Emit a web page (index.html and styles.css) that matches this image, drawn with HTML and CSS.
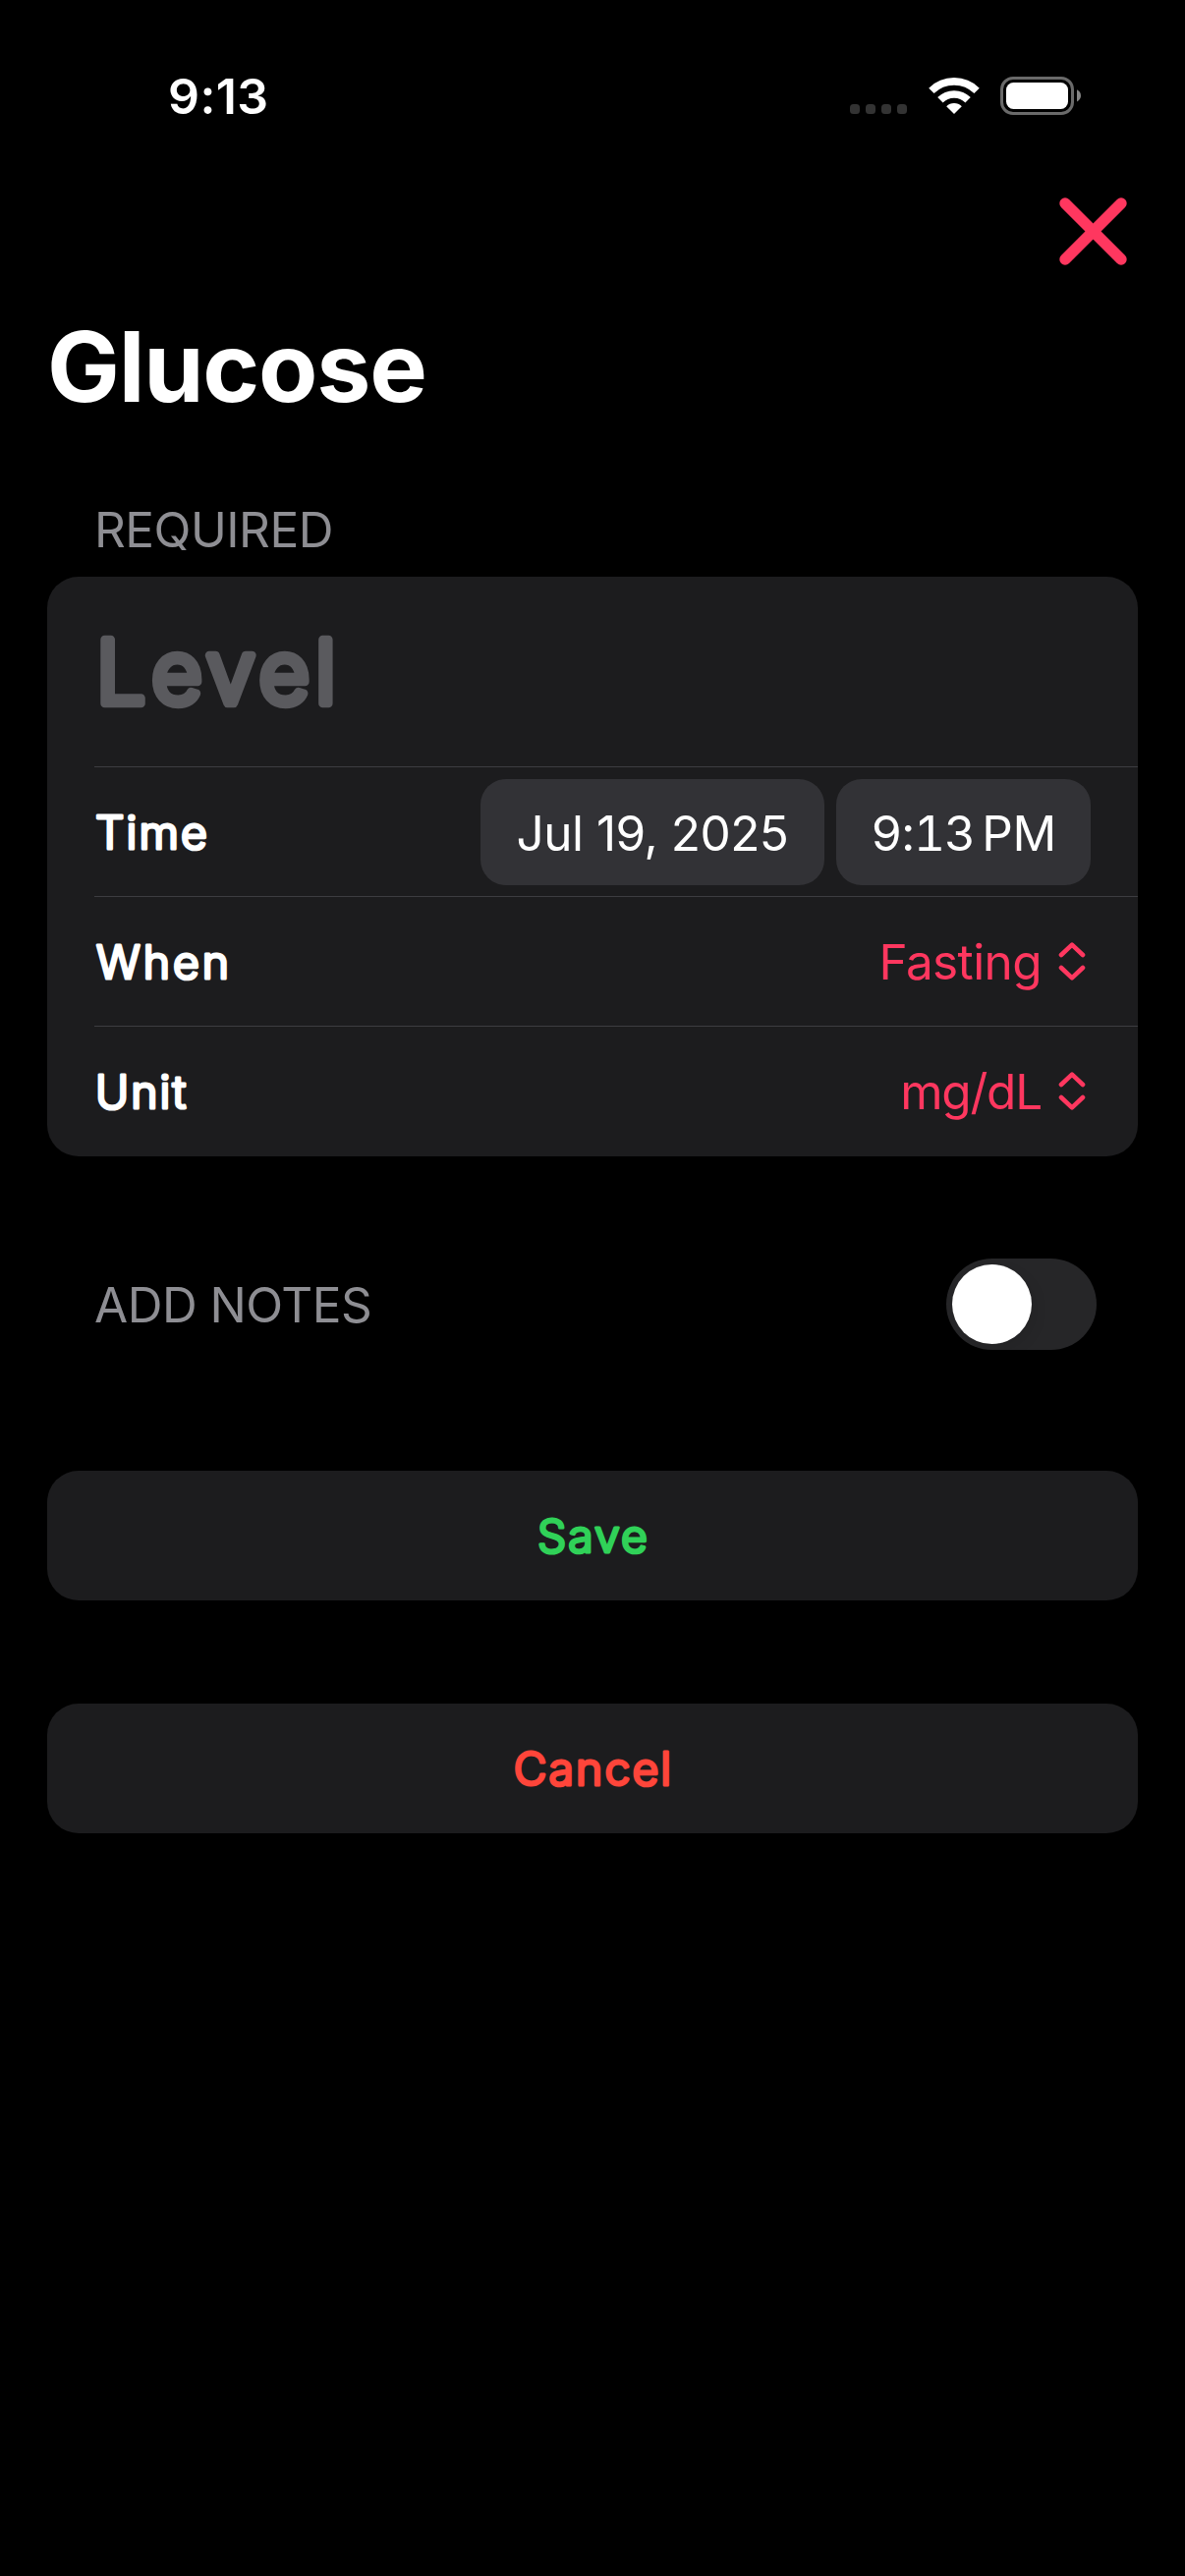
FILE: index.html
```
<!DOCTYPE html>
<html lang="en">
<head>
  <meta charset="UTF-8" />
  <meta name="viewport" content="width=device-width, initial-scale=1.0"/>
  <title>Glucose</title>
  <link rel="stylesheet" href="styles.css">
</head>
<body>
  <div class="status-bar">
    <span class="clock">9:13</span>
    <div class="status-icons">
      <div class="dots"><i></i><i></i><i></i><i></i></div>
      <svg class="wifi" width="52" height="37" viewBox="0 0 52 37">
        <path d="M2.9 13.4A32.8 32.8 0 0 1 49.1 13.4M11.9 22.8A19.9 19.9 0 0 1 40.1 22.8" fill="none" stroke="#fff" stroke-width="7.6"/>
        <path d="M26 37L18.2 29.2A11.2 11.2 0 0 1 33.8 29.2Z" fill="#fff"/>
      </svg>
      <svg class="battery" width="83" height="39" viewBox="0 0 83 39">
        <rect x="1.5" y="1.5" width="72" height="36" rx="11.5" fill="none" stroke="#6a6a6a" stroke-width="3"/>
        <rect x="6" y="6" width="63" height="27" rx="7.5" fill="#fff"/>
        <path d="M78 13.2Q82 15.2 82 19.3T78 25.4Z" fill="#858585"/>
      </svg>
    </div>
  </div>

  <header>
    <button class="close-btn" aria-label="Close">
      <svg width="69" height="69" viewBox="0 0 69 69">
        <path d="M6 6L63 63M63 6L6 63" stroke="#ff375f" stroke-width="11.4" stroke-linecap="round"/>
      </svg>
    </button>
    <h1>Glucose</h1>
  </header>

  <h2 class="section-title">REQUIRED</h2>
  <div class="card">
    <div class="row level-row">
      <svg class="rounded level" width="260" height="100"><text x="2" y="82">Level</text></svg>
    </div>
    <div class="row">
      <svg class="rounded label" width="160" height="60"><text x="1" y="47">Time</text></svg>
      <div class="pickers">
        <span class="picker date">Jul 19, 2025</span>
        <span class="picker time"><span class="digits">9:13</span><span class="ampm">PM</span></span>
      </div>
    </div>
    <div class="row">
      <svg class="rounded label when" width="160" height="60"><text x="2" y="47">When</text></svg>
      <div class="menu">
        <span>Fasting</span>
        <svg class="chevrons" width="28" height="42" viewBox="0 0 28 42"><path d="M3 14L14 3.6L25 14M3 27L14 37.4L25 27"/></svg>
      </div>
    </div>
    <div class="row">
      <svg class="rounded label" width="160" height="60"><text x="1" y="47">Unit</text></svg>
      <div class="menu">
        <span class="unit">mg/dL</span>
        <svg class="chevrons" width="28" height="42" viewBox="0 0 28 42"><path d="M3 14L14 3.6L25 14M3 27L14 37.4L25 27"/></svg>
      </div>
    </div>
  </div>

  <div class="notes">
    <h2 class="section-title">ADD NOTES</h2>
    <div class="toggle"><div class="knob"></div></div>
  </div>

  <button class="card action save">
    <svg class="rounded label" width="200" height="60"><text x="101" y="47">Save</text></svg>
  </button>
  <button class="card action cancel">
    <svg class="rounded label" width="200" height="60"><text x="101" y="47">Cancel</text></svg>
  </button>
</body>
</html>
```
FILE: styles.css
```
* {
  box-sizing: border-box;
}
body {
  margin: 0;
  padding: 0 48px;
  background-color: #000;
  color: #fff;
  font-family: Inter, "Liberation Sans", sans-serif;
  font-size: 49.5px;
}
svg {
  display: block;
}
button {
  border: none;
  background: none;
  padding: 0;
  cursor: pointer;
}
.status-bar {
  height: 195px;
  display: flex;
  align-items: center;
  justify-content: space-between;
  padding: 0 57px 0 123px;
}
.clock {
  font-size: 50px;
  font-weight: 600;
  letter-spacing: 0.4px;
}
.status-icons {
  display: flex;
  align-items: center;
}
.dots {
  display: flex;
  gap: 6px;
  padding-top: 26px;
}
.dots i {
  width: 10px;
  height: 10px;
  border-radius: 3.5px;
  background-color: #333;
}
.wifi {
  margin: 0 21px 0 22px;
}

/* header */
header {
  display: flex;
  flex-direction: column;
  padding-top: 6px;
}
.close-btn {
  align-self: flex-end;
  margin-right: 11px;
}
h1 {
  margin: 44px 0 0;
  font-size: 98.5px;
  line-height: 120px;
  font-weight: 700;
  letter-spacing: -1.2px;
}
.section-title {
  margin: 0;
  padding-left: 48px;
  font-size: 49.5px;
  line-height: 60px;
  font-weight: 400;
  letter-spacing: -0.5px;
  color: #8e8e93;
}
header + .section-title {
  margin: 75px 0 18px;
}

/* form */
.card {
  background-color: #1c1c1e;
  border-radius: 32px;
}
.row {
  height: 132px;
  margin-left: 48px;
  padding-right: 48px;
  display: flex;
  align-items: center;
  justify-content: space-between;
}
.row + .row {
  border-top: 1px solid #3d3d41;
}
.level-row {
  height: 193px;
}
.card .row:last-child {
  height: 133px;
}
/* thin weight plus a round-joined stroke gives the soft corners */
.rounded {
  overflow: visible;
  fill: currentColor;
  stroke: currentColor;
  stroke-linejoin: round;
  font-weight: 300;
}
.label {
  font-size: 46.3px;
  stroke-width: 3.2px;
  letter-spacing: 2.1px;
}
.when {
  letter-spacing: 3px;
}
.level {
  font-size: 89px;
  stroke-width: 8.5px;
  letter-spacing: 5.9px;
  color: #5a5a5e;
}
.pickers {
  display: flex;
  gap: 12px;
}
.picker {
  height: 108px;
  display: flex;
  align-items: center;
  justify-content: center;
  border-radius: 26px;
  background-color: #323236;
  padding-top: 2px;
}
.date {
  width: 350px;
  letter-spacing: -0.5px;
}
.time {
  width: 259px;
}
.digits {
  font-variant-numeric: tabular-nums;
  letter-spacing: -0.9px;
}
.ampm {
  margin-left: 7px;
  letter-spacing: -0.5px;
}
.menu {
  display: flex;
  align-items: center;
  gap: 17px;
  padding-right: 5px;
  color: #ff375f;
  letter-spacing: -0.6px;
}
.unit {
  letter-spacing: -1.2px;
}
.chevrons {
  fill: none;
  stroke: currentColor;
  stroke-width: 4.6px;
  stroke-linecap: round;
  stroke-linejoin: round;
}
.notes {
  display: flex;
  align-items: center;
  justify-content: space-between;
  margin: 104px 0 123px;
  padding-right: 42px;
}
.toggle {
  width: 153px;
  height: 93px;
  padding: 6px;
  border-radius: 47px;
  background-color: #262628;
}
.knob {
  width: 81px;
  height: 81px;
  border-radius: 50%;
  background-color: #fff;
  box-shadow: 4px 6px 14px rgba(0, 0, 0, 0.08);
}
.action {
  width: 100%;
  height: 132px;
  display: flex;
  align-items: center;
  justify-content: center;
  background-color: #1c1c1e;
  font-family: inherit;
  text-anchor: middle;
}
.save {
  color: #30d158;
}
.cancel {
  margin-top: 105px;
  color: #ff453a;
}
```
